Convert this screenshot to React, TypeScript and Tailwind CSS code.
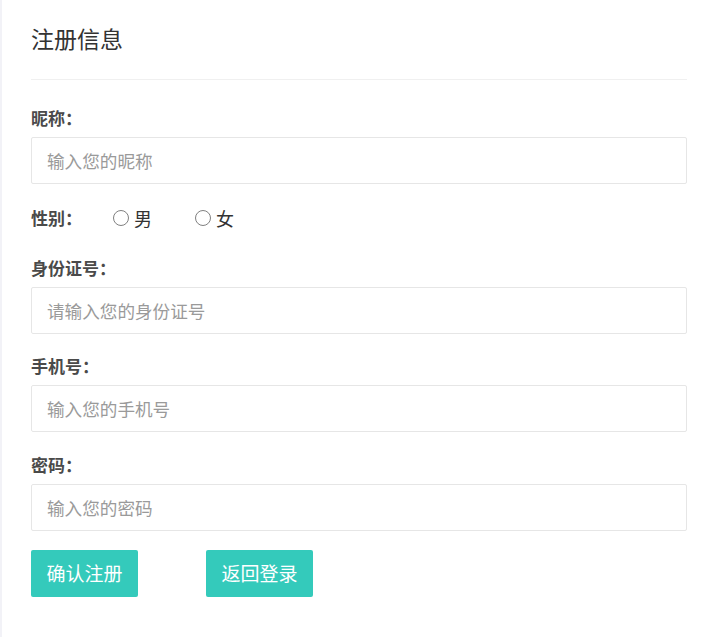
import React from "react";

const font = { fontFamily: '"Noto Sans CJK SC", "Noto Sans", sans-serif' };

function Field({ label, placeholder, mb }: { label: string; placeholder: string; mb: string }) {
  return (
    <div className={mb}>
      <div className="text-[17px] leading-6 font-bold text-[#4a4a4a] mb-[7px]">{label}</div>
      <input
        className="block w-full h-[47px] border border-[#e6e6e6] rounded-[2px] bg-white px-[15px] text-[17.6px] text-[#333] placeholder:text-[#9a9a9a] outline-none"
        placeholder={placeholder}
      />
    </div>
  );
}

function Radio({ label }: { label: string }) {
  return (
    <label className="flex items-center gap-[5px] text-[18px] leading-6 text-[#333]">
      <span className="w-[16px] h-[16px] rounded-full border border-[#808080] bg-white" />
      <span>{label}</span>
    </label>
  );
}

export default function App() {
  return (
    <div className="min-h-[637px] w-[705px] bg-white border-l-2 border-[#f2f2f7]" style={font}>
      <div className="pl-[29px] pr-[18px]">
        <div className="pt-[23px] pb-[26px] border-b border-[#f0f0f0]">
          <h1 className="text-[23px] leading-[30px] text-[#333] font-normal">注册信息</h1>
        </div>
        <div className="pt-[26px]">
          <Field label="昵称：" placeholder="输入您的昵称" mb="mb-[22px]" />
          <div className="flex items-center h-6 mb-[26px]">
            <div className="text-[17px] leading-6 font-bold text-[#4a4a4a] w-[82px]">性别：</div>
            <div className="flex items-center gap-[43px]">
              <Radio label="男" />
              <Radio label="女" />
            </div>
          </div>
          <Field label="身份证号：" placeholder="请输入您的身份证号" mb="mb-[20px]" />
          <Field label="手机号：" placeholder="输入您的手机号" mb="mb-[21px]" />
          <Field label="密码：" placeholder="输入您的密码" mb="mb-[19px]" />
          <div className="flex gap-[68px]">
            <button className="w-[107px] h-[47px] rounded-[2px] bg-[#34cabb] text-white text-[19px]">确认注册</button>
            <button className="w-[107px] h-[47px] rounded-[2px] bg-[#34cabb] text-white text-[19px]">返回登录</button>
          </div>
        </div>
      </div>
    </div>
  );
}
